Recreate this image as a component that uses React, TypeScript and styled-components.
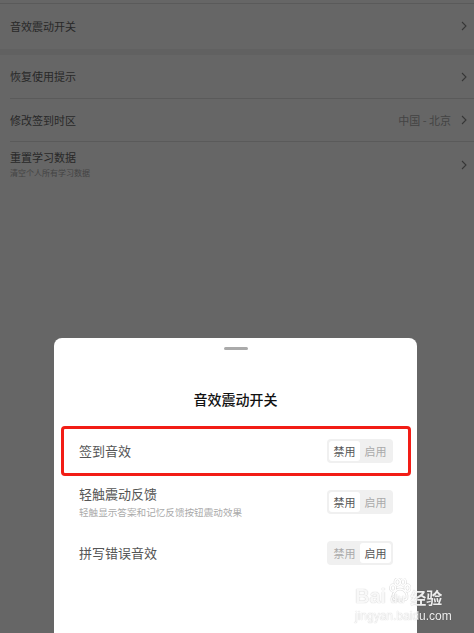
import React from "react"
import styled, { createGlobalStyle } from "styled-components"

const GlobalStyle = createGlobalStyle`
  html, body {
    margin: 0;
    padding: 0;
    background: #fff;
  }
  body {
    font-family: "Noto Sans CJK SC", "Noto Sans", sans-serif;
    overflow: hidden;
  }
`

type SettingItem = {
  label: string
  sub?: string
  value?: string
  height: number
  divided?: boolean
}

const firstGroup: SettingItem[] = [{ label: "音效震动开关", height: 44 }]

const secondGroup: SettingItem[] = [
  { label: "恢复使用提示", height: 43, divided: true },
  { label: "修改签到时区", value: "中国 - 北京", height: 42, divided: true },
  { label: "重置学习数据", sub: "清空个人所有学习数据", height: 45 },
]

type SwitchItem = {
  label: string
  sub?: string
  enabled: boolean
  height: number
  highlighted?: boolean
}

const switches: SwitchItem[] = [
  { label: "签到音效", enabled: false, height: 50, highlighted: true },
  { label: "轻触震动反馈", sub: "轻触显示答案和记忆反馈按钮震动效果", enabled: false, height: 52 },
  { label: "拼写错误音效", enabled: true, height: 50 },
]

const Chevron = () => (
  <svg width="6" height="10" viewBox="0 0 6 10">
    <polyline points="1,1 5,5 1,9" fill="none" stroke="#888" strokeWidth="1.1" />
  </svg>
)

const pawShapes = (
  <>
    <ellipse cx="4" cy="10" rx="2.6" ry="3.2" />
    <ellipse cx="8.5" cy="4" rx="2.6" ry="3.2" />
    <ellipse cx="14" cy="4" rx="2.6" ry="3.2" />
    <ellipse cx="18.5" cy="10" rx="2.6" ry="3.2" />
    <path d="M11 11 C6 11 3 17 4 20 C5 23 9 22 11 22 C13 22 17 23 18 20 C19 17 16 11 11 11 Z" />
  </>
)

const Paw = () => (
  <svg width="22" height="24" viewBox="0 0 22 24">
    <g fill="none" stroke="rgba(0,0,0,0.14)" strokeWidth="2.6">
      {pawShapes}
    </g>
    <g fill="none" stroke="#fff" strokeWidth="1.4">
      {pawShapes}
    </g>
  </svg>
)

const App = () => {
  return (
    <>
      <GlobalStyle />
      <Page>
        <TopRule />
        {firstGroup.map((item) => (
          <ListRow key={item.label} $h={item.height}>
            <RowLabel>{item.label}</RowLabel>
            <Chevron />
          </ListRow>
        ))}
        <GroupGap />
        {secondGroup.map((item) => (
          <ListRow key={item.label} $h={item.height} $divided={item.divided}>
            <LabelBlock>
              <RowLabel>{item.label}</RowLabel>
              {item.sub && <RowSub>{item.sub}</RowSub>}
            </LabelBlock>
            {item.value && <RowValue>{item.value}</RowValue>}
            <Chevron />
          </ListRow>
        ))}
      </Page>

      <Overlay>
        <Sheet>
          <Handle />
          <SheetTitle>音效震动开关</SheetTitle>
          {switches.map((s) => (
            <SheetRow key={s.label} $h={s.height} $highlighted={s.highlighted}>
              <LabelBlock>
                <SheetLabel>{s.label}</SheetLabel>
                {s.sub && <SheetSub>{s.sub}</SheetSub>}
              </LabelBlock>
              <Segmented>
                <Segment $active={!s.enabled}>禁用</Segment>
                <Segment $active={s.enabled}>启用</Segment>
              </Segmented>
            </SheetRow>
          ))}
        </Sheet>
      </Overlay>

      <Watermark>
        <Brand>
          Bai
          <PawWrap>
            <Paw />
            <PawText>du</PawText>
          </PawWrap>
          <BrandCn>经验</BrandCn>
        </Brand>
        <Domain>jingyan.baidu.com</Domain>
      </Watermark>
    </>
  )
}

export default App

const Page = styled.div`
  background: #fff;
  min-height: 633px;
`

const TopRule = styled.div`
  height: 1px;
  margin-top: 3px;
  background: #e2e2e2;
`

const GroupGap = styled.div`
  height: 6px;
  background: #f2f2f2;
`

const ListRow = styled.div<{ $h: number; $divided?: boolean }>`
  display: flex;
  align-items: center;
  gap: 10px;
  height: ${(p) => p.$h}px;
  margin-left: 10px;
  padding-right: 7px;
  border-bottom: 1px solid ${(p) => (p.$divided ? "#e2e2e2" : "transparent")};
`

const LabelBlock = styled.div`
  flex: 1;
  display: flex;
  flex-direction: column;
`

const RowLabel = styled.div`
  flex: 1;
  font-size: 11px;
  line-height: 15px;
  color: #666;
`

const RowSub = styled.div`
  font-size: 8px;
  line-height: 12px;
  color: #aaa;
  margin-top: 2px;
`

const RowValue = styled.div`
  font-size: 11px;
  color: #aaa;
  margin-right: 0;
`

const Overlay = styled.div`
  position: fixed;
  inset: 0;
  background: rgba(0, 0, 0, 0.6);
  display: flex;
  align-items: flex-end;
`

const Sheet = styled.div`
  width: 363px;
  height: 295px;
  margin-left: 54px;
  background: #fff;
  border-radius: 8px 8px 0 0;
  display: flex;
  flex-direction: column;
`

const Handle = styled.div`
  align-self: center;
  width: 24px;
  height: 3px;
  margin-top: 9px;
  border-radius: 2px;
  background: #aaa;
`

const SheetTitle = styled.div`
  margin-top: 39px;
  margin-bottom: 17px;
  text-align: center;
  font-size: 14px;
  line-height: 20px;
  font-weight: 500;
  color: #111;
`

const SheetRow = styled.div<{ $h: number; $highlighted?: boolean }>`
  display: flex;
  align-items: center;
  height: ${(p) => p.$h}px;
  box-sizing: border-box;
  margin: 0 6px 0 7px;
  padding: 0 15px;
  border: 3px solid ${(p) => (p.$highlighted ? "#f21d16" : "transparent")};
  border-radius: 4px;
`

const SheetLabel = styled.div`
  font-size: 13px;
  line-height: 18px;
  color: #555;
`

const SheetSub = styled.div`
  font-size: 9.6px;
  line-height: 13px;
  color: #aaa;
  margin-top: 3px;
`

const Segmented = styled.div`
  display: flex;
  padding: 2px;
  border-radius: 4px;
  background: #f0f0f0;
`

const Segment = styled.div<{ $active: boolean }>`
  width: 31px;
  height: 20px;
  line-height: 20px;
  text-align: center;
  font-size: 11px;
  border-radius: 3px;
  background: ${(p) => (p.$active ? "#fff" : "transparent")};
  color: ${(p) => (p.$active ? "#555" : "#aaa")};
`

const Watermark = styled.div`
  position: fixed;
  left: 355px;
  top: 578px;
  display: flex;
  flex-direction: column;
  align-items: flex-start;
  color: rgba(255, 255, 255, 0.9);
  text-shadow: 0 0 1px rgba(0, 0, 0, 0.3);
  font-family: "Liberation Sans", Arial, sans-serif;
  pointer-events: none;
`

const Brand = styled.div`
  display: flex;
  align-items: flex-end;
  height: 28px;
  font-size: 20px;
  font-weight: bold;
  line-height: 20px;
`

const PawWrap = styled.div`
  position: relative;
  width: 20px;
  height: 28px;
  margin: 0 1px 0 3px;
`

const PawText = styled.span`
  position: absolute;
  left: 1px;
  bottom: 0;
  font-size: 12px;
  line-height: 14px;
`

const BrandCn = styled.span`
  font-family: "Noto Sans CJK SC", sans-serif;
  font-size: 16px;
  line-height: 18px;
`

const Domain = styled.div`
  font-size: 12px;
  line-height: 14px;
  margin-top: 3px;
`
